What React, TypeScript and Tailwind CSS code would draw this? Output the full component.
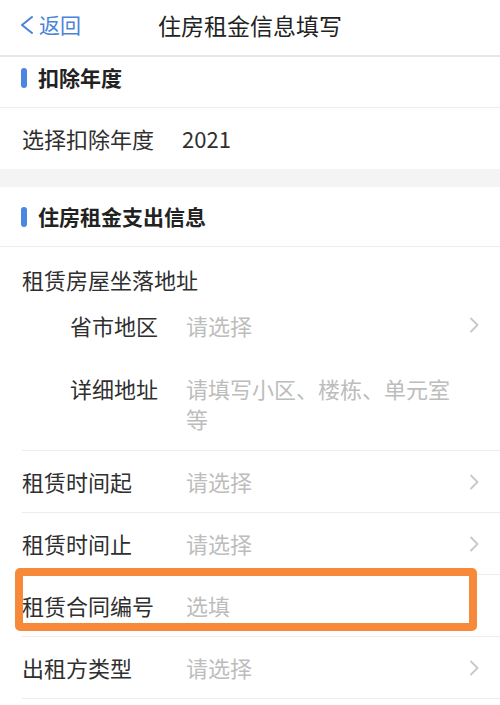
import React from "react";

const font = { fontFamily: '"Noto Sans CJK SC", "Noto Sans", sans-serif' };

function Chevron() {
    return (
        <svg width="10" height="16" viewBox="0 0 10 16" fill="none" className="shrink-0">
            <path d="M2 1.5 L8.5 8 L2 14.5" stroke="#c8c8cc" strokeWidth="1.8" strokeLinecap="round" strokeLinejoin="round" />
        </svg>
    );
}

function SectionTitle({ text, className }: { text: string; className: string }) {
    return (
        <div className={`flex items-center gap-[11px] pl-[21px] border-b border-[#ececec] ${className}`}>
            <span className="w-[6px] h-[20px] rounded-full bg-[#4a86e2]" />
            <span className="text-[21px] font-bold text-[#222]">{text}</span>
        </div>
    );
}

function Row({ label, value, arrow = true, highlight = false }: { label: string; value: string; arrow?: boolean; highlight?: boolean }) {
    return (
        <div className="relative pl-[22px]">
            <div className="h-[62px] flex items-center pr-[21px] border-b border-[#ececec]">
                <span className="w-[164px] shrink-0 text-[22px] text-[#2f2f2f]">{label}</span>
                <span className="flex-1 text-[22px] text-[#bdbdbd]">{value}</span>
                {arrow && <Chevron />}
            </div>
            {highlight && (
                <div className="absolute left-[15px] top-[-7px] w-[462px] h-[63px] rounded-[5px] border-[8px] border-[#f68a3a] pointer-events-none" />
            )}
        </div>
    );
}

export default function App() {
    return (
        <div className="w-[500px] h-[705px] overflow-hidden bg-white" style={font}>
            {/* Nav bar */}
            <div className="h-[57px] grid grid-cols-[1fr_auto_1fr] items-center pb-[5px] border-b-2 border-[#e6e6e6]">
                <div className="flex items-center gap-[5px] pl-[20px] text-[#4a83d8]">
                    <svg width="14" height="18" viewBox="0 0 14 18" fill="none">
                        <path d="M12 1 L2 9 L12 17" stroke="#4a83d8" strokeWidth="2" strokeLinecap="round" strokeLinejoin="round" />
                    </svg>
                    <span className="text-[21px]">返回</span>
                </div>
                <div className="text-[23px] text-[#222]">住房租金信息填写</div>
                <div />
            </div>

            <SectionTitle text="扣除年度" className="h-[51px] pb-[9px]" />

            <div className="h-[61px] flex items-center pl-[22px]">
                <span className="w-[160px] text-[22px] text-[#2f2f2f]">选择扣除年度</span>
                <span className="text-[22px] text-[#2f2f2f]">2021</span>
            </div>

            <div className="h-[18px] bg-[#f4f4f5]" />

            <SectionTitle text="住房租金支出信息" className="h-[60px]" />

            {/* Address block */}
            <div className="pl-[22px]">
                <div className="pt-[17px] pb-[17px] border-b border-[#ececec] text-[22px] leading-[30px]">
                    <div className="text-[#2f2f2f]">租赁房屋坐落地址</div>
                    <div className="flex items-center mt-[16px] pl-[48px] pr-[21px]">
                        <span className="w-[116px] shrink-0 text-[#2f2f2f]">省市地区</span>
                        <span className="flex-1 text-[#bdbdbd]">请选择</span>
                        <Chevron />
                    </div>
                    <div className="flex items-start mt-[33px] pl-[48px]">
                        <span className="w-[116px] shrink-0 text-[#2f2f2f]">详细地址</span>
                        <span className="max-w-[272px] text-[#bdbdbd]">请填写小区、楼栋、单元室等</span>
                    </div>
                </div>
            </div>

            <Row label="租赁时间起" value="请选择" />
            <Row label="租赁时间止" value="请选择" />
            <Row label="租赁合同编号" value="选填" arrow={false} highlight />
            <Row label="出租方类型" value="请选择" />
        </div>
    );
}
